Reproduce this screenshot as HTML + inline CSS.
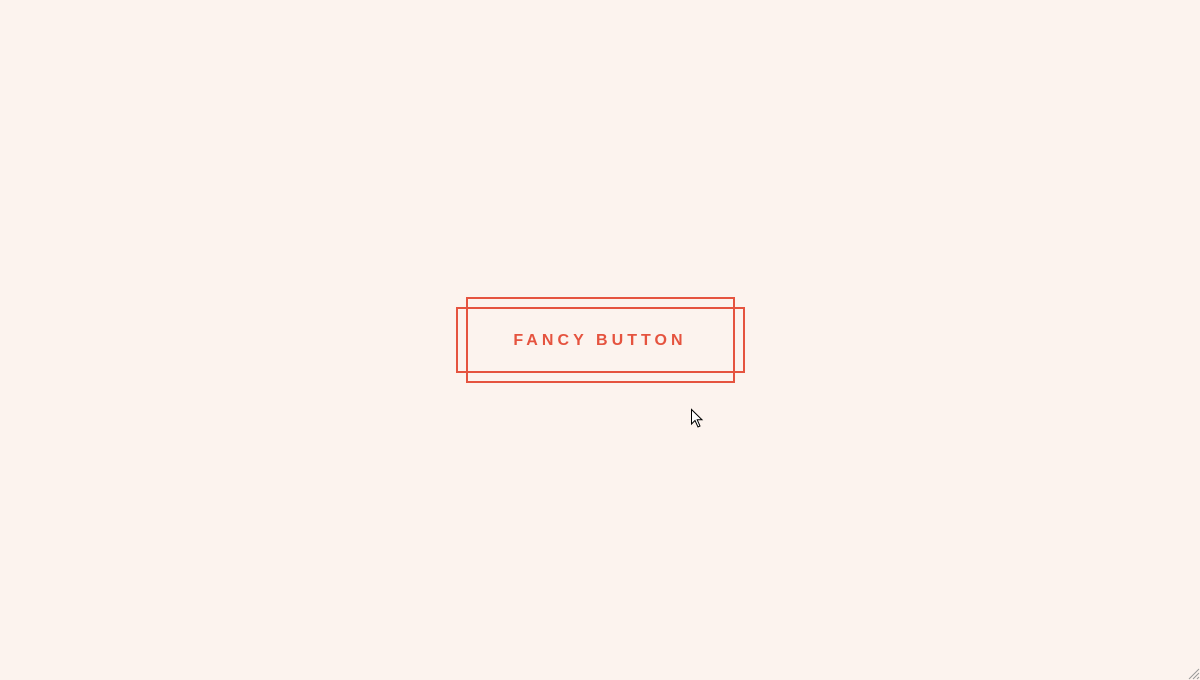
<!DOCTYPE html>
<html><head><style>
html,body{margin:0;padding:0;width:1200px;height:680px;background:#fcf3ee;overflow:hidden;position:relative}
.b{position:absolute;border:2px solid #e5533f;box-sizing:border-box}
.t{position:absolute;left:455px;width:290px;top:331px;text-align:center;font:bold 16px/20px "Liberation Sans",sans-serif;letter-spacing:4.05px;color:#e5533f;box-sizing:border-box}
</style></head><body>
<div class="b" style="left:456px;top:307px;width:289px;height:66px"></div>
<div class="b" style="left:466px;top:297px;width:269px;height:86px"></div>
<div class="t">FANCY BUTTON</div>
<svg style="position:absolute;left:690px;top:408px" width="14" height="22" viewBox="0 0 14 22"><path d="M1.5 1.5 L1.5 16 L5 12.5 L8 19 L10 18 L7.2 11.8 L12 11.8 Z" fill="#fff" stroke="#000" stroke-width="1"/></svg>
<svg style="position:absolute;left:1186px;top:666px" width="14" height="14"><path d="M13 3 L3 13 M13 7 L7 13 M13 11 L11 13" stroke="#999" stroke-width="1"/></svg>
</body></html>
